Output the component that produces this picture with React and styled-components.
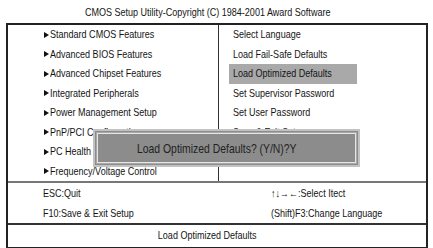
import styled, { createGlobalStyle } from "styled-components"

const Global = createGlobalStyle`
  body {
    margin: 0;
    background: #fff;
    font-family: "Liberation Sans", Arial, sans-serif;
    color: #141414;
  }
`

const Page = styled.div`
  width: 433px;
  height: 248px;
  overflow: hidden;
`

/* the original uses a narrow face; squeeze Liberation Sans to match */
const Narrow = styled.span`
  display: inline-block;
  white-space: nowrap;
  transform: scaleX(${(p) => p.$scale || 0.82});
  transform-origin: ${(p) => p.$origin || "left"} center;
`

const Title = styled.div`
  height: 23px;
  line-height: 24px;
  font-size: 11px;
  text-align: center;
  padding-right: 17px;
`

const Frame = styled.div`
  position: relative;
  margin-left: 6px;
  width: 418px;
  border: 2px solid #222;
  font-size: 11px;
`

const Menu = styled.div`
  display: grid;
  grid-template-columns: 210px 1fr;
  border-bottom: 2px solid #777;
`

const Column = styled.div`
  display: flex;
  flex-direction: column;
  border-left: ${(p) => (p.$divided ? "1px solid #333" : "none")};
  padding-left: ${(p) => p.$indent}px;
`

const Item = styled.div`
  box-sizing: border-box;
  height: 19.5px;
  line-height: 19.5px;
  display: flex;
  align-items: center;
  width: ${(p) => (p.$wide ? "auto" : "128px")};
  padding-left: ${(p) => (p.$arrow ? 0 : 4)}px;
  background: ${(p) => (p.$active ? "#a9a9a9" : "transparent")};

  ${(p) =>
    p.$arrow &&
    `&::before {
      content: "";
      width: 0;
      height: 0;
      border-left: 5px solid #111;
      border-top: 3.5px solid transparent;
      border-bottom: 3.5px solid transparent;
      margin-right: 1px;
    }`}
`

const Keys = styled.div`
  display: grid;
  grid-template-columns: 228px 1fr;
  padding-left: 35px;
  border-bottom: 2px solid #333;
`

const Key = styled.div`
  height: 20px;
  line-height: 21px;
`

const Status = styled.div`
  height: 22px;
  line-height: 21px;
  text-align: center;
  padding-right: 20px;
`

const Dialog = styled.div`
  position: absolute;
  left: 85px;
  top: 104px;
  width: 259px;
  height: 30px;
  background: #8c8c8c;
  border: 2px solid #c2c2c2;
  padding: 2px;
`

const DialogInner = styled.div`
  height: 100%;
  box-sizing: border-box;
  border: 1px solid #e6e6e6;
  outline: 1px solid #a8a8a8;
  display: flex;
  align-items: center;
  padding-left: 39px;
  font-size: 13px;
  color: #222;
`

const leftItems = [
  "Standard CMOS Features",
  "Advanced BIOS Features",
  "Advanced Chipset Features",
  "Integrated Peripherals",
  "Power Management Setup",
  "PnP/PCI Configurations",
  "PC Health Status",
  "Frequency/Voltage Control",
]

const rightItems = [
  "Select Language",
  "Load Fail-Safe Defaults",
  "Load Optimized Defaults",
  "Set Supervisor Password",
  "Set User Password",
  "Save & Exit Setup",
  "Exit Without Saving",
]

export default function App() {
  return (
    <Page>
      <Global />
      <Title>
        <Narrow $origin="center">CMOS Setup Utility-Copyright (C) 1984-2001 Award Software</Narrow>
      </Title>
      <Frame>
        <Menu>
          <Column $indent={36}>
            {leftItems.map((t) => (
              <Item key={t} $arrow $wide>
                <Narrow>{t}</Narrow>
              </Item>
            ))}
          </Column>
          <Column $divided $indent={10}>
            {rightItems.map((t) => (
              <Item key={t} $active={t === "Load Optimized Defaults"}>
                <Narrow>{t}</Narrow>
              </Item>
            ))}
          </Column>
        </Menu>
        <Keys>
          <Key><Narrow>ESC:Quit</Narrow></Key>
          <Key><Narrow>↑↓→←:Select Itect</Narrow></Key>
          <Key><Narrow>F10:Save &amp; Exit Setup</Narrow></Key>
          <Key><Narrow>(Shift)F3:Change Language</Narrow></Key>
        </Keys>
        <Status>
          <Narrow $origin="center">Load Optimized Defaults</Narrow>
        </Status>
        <Dialog>
          <DialogInner>
            <Narrow $scale={0.8}>Load Optimized Defaults? (Y/N)?Y</Narrow>
          </DialogInner>
        </Dialog>
      </Frame>
    </Page>
  )
}
